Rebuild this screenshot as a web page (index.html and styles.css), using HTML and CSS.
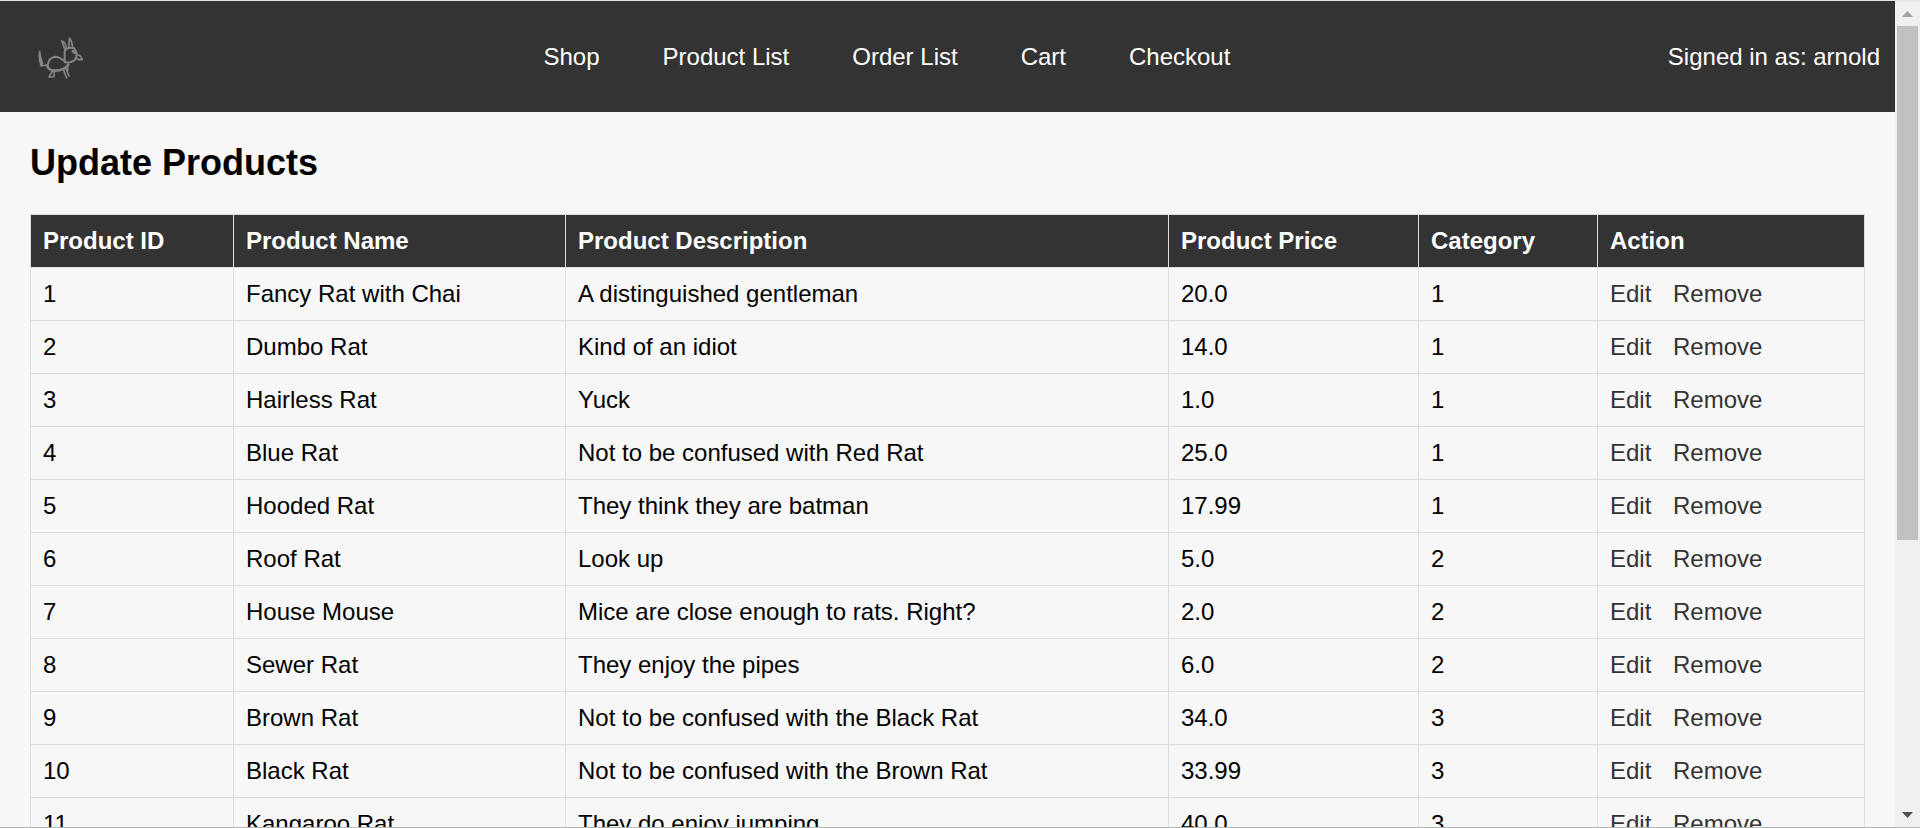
FILE: index.html
```html
<!DOCTYPE html>
<html lang="en">
<head>
<meta charset="utf-8">
<title>Update Products</title>
<link rel="stylesheet" href="styles.css">
</head>
<body>
<div class="window">
  <div class="page">
    <header class="header">
      <a class="logo" href="#" aria-label="Home">
        <svg viewBox="45 33 273 273" fill="none" stroke="#848484" stroke-width="6" stroke-linejoin="round" stroke-linecap="round">
          <path d="M143 196C146 180 150 173 165 170C178 170 185 176 194 184"/>
          <path d="M142 196C143 206 150 211 164 212C183 212 198 206 205 194" stroke-width="8"/>
          <path d="M194 187L194 154C198 144 210 142 222 144L230 158C231 170 229 176 222 182C216 186 208 189 198 187"/>
          <path d="M196 150C191 142 190 131 185 123C192 124 198 132 199 146" stroke-width="5"/>
          <path d="M207 143C207 132 207 122 209 114C215 121 217 133 218 144" stroke-width="5"/>
          <path d="M229 162L241 168L247 179L237 179L228 174" stroke-width="5"/>
          <path d="M219 154L225 158" stroke-width="9"/>
          <path d="M119 154C115 168 119 184 123 198L141 195M119 154L122 176L128 191" stroke-width="5"/>
          <path d="M121 172L125 194" stroke-width="7"/>
          <path d="M158 213C154 219 150 224 147 231L162 230L163 213" stroke-width="5"/>
          <path d="M190 208L200 234M197 204L207 228M203 198L203 212" stroke-width="5"/>
        </svg>
      </a>
      <nav class="nav" aria-label="Main">
        <a href="#">Shop</a>
        <a href="#">Product List</a>
        <a href="#">Order List</a>
        <a href="#">Cart</a>
        <a href="#">Checkout</a>
      </nav>
      <span class="user">Signed in as: arnold</span>
    </header>
    <main class="content">
      <h1>Update Products</h1>
      <table class="products">
        <colgroup>
          <col class="col-id"><col class="col-name"><col class="col-desc"><col class="col-price"><col class="col-cat"><col>
        </colgroup>
        <thead>
          <tr><th>Product ID</th><th>Product Name</th><th>Product Description</th><th>Product Price</th><th>Category</th><th>Action</th></tr>
        </thead>
        <tbody>
          <tr><td>1</td><td>Fancy Rat with Chai</td><td>A distinguished gentleman</td><td>20.0</td><td>1</td><td><a href="#">Edit</a> <a href="#">Remove</a></td></tr>
          <tr><td>2</td><td>Dumbo Rat</td><td>Kind of an idiot</td><td>14.0</td><td>1</td><td><a href="#">Edit</a> <a href="#">Remove</a></td></tr>
          <tr><td>3</td><td>Hairless Rat</td><td>Yuck</td><td>1.0</td><td>1</td><td><a href="#">Edit</a> <a href="#">Remove</a></td></tr>
          <tr><td>4</td><td>Blue Rat</td><td>Not to be confused with Red Rat</td><td>25.0</td><td>1</td><td><a href="#">Edit</a> <a href="#">Remove</a></td></tr>
          <tr><td>5</td><td>Hooded Rat</td><td>They think they are batman</td><td>17.99</td><td>1</td><td><a href="#">Edit</a> <a href="#">Remove</a></td></tr>
          <tr><td>6</td><td>Roof Rat</td><td>Look up</td><td>5.0</td><td>2</td><td><a href="#">Edit</a> <a href="#">Remove</a></td></tr>
          <tr><td>7</td><td>House Mouse</td><td>Mice are close enough to rats. Right?</td><td>2.0</td><td>2</td><td><a href="#">Edit</a> <a href="#">Remove</a></td></tr>
          <tr><td>8</td><td>Sewer Rat</td><td>They enjoy the pipes</td><td>6.0</td><td>2</td><td><a href="#">Edit</a> <a href="#">Remove</a></td></tr>
          <tr><td>9</td><td>Brown Rat</td><td>Not to be confused with the Black Rat</td><td>34.0</td><td>3</td><td><a href="#">Edit</a> <a href="#">Remove</a></td></tr>
          <tr><td>10</td><td>Black Rat</td><td>Not to be confused with the Brown Rat</td><td>33.99</td><td>3</td><td><a href="#">Edit</a> <a href="#">Remove</a></td></tr>
          <tr><td>11</td><td>Kangaroo Rat</td><td>They do enjoy jumping</td><td>40.0</td><td>3</td><td><a href="#">Edit</a> <a href="#">Remove</a></td></tr>
        </tbody>
      </table>
    </main>
  </div>
  <div class="scrollbar" aria-hidden="true">
    <svg class="arrow" viewBox="0 0 25 25"><path d="M7 16L12.500 10L18 16Z" fill="#a3a3a3"/></svg>
    <div class="track"><div class="thumb"></div></div>
    <svg class="arrow" viewBox="0 0 25 25"><path d="M7 10L12.500 16L18 10Z" fill="#505050"/></svg>
  </div>
</div>
</body>
</html>
```
FILE: styles.css
```css
* { box-sizing: border-box; }

body {
  margin: 0;
  background: #f7f7f7;
  color: #000;
  font-family: Arial, "Liberation Sans", sans-serif;
  font-size: 24px;
  line-height: 28px;
}

a { text-decoration: none; }

.window {
  display: flex;
  height: 100vh;
  border-top: 1px solid #dfe3e1;
  border-bottom: 1px solid #b0b5b0;
}

.page {
  flex: 1;
  min-width: 0;
  overflow: hidden;
}

.header {
  display: flex;
  align-items: center;
  justify-content: space-between;
  padding: 10px 15px;
  background: #333;
  color: #fff;
}

.logo svg {
  display: block;
  width: 91px;
  height: 91px;
}

.nav {
  display: flex;
  gap: 63px;
}

.nav a { color: #fff; }

.content { padding: 30px; }

h1 {
  margin: 0 0 30px;
  font-size: 36px;
  line-height: 42px;
}

.products {
  width: 100%;
  border-collapse: collapse;
  table-layout: fixed;
}

.col-id { width: 11.07%; }
.col-name { width: 18.1%; }
.col-desc { width: 32.88%; }
.col-price { width: 13.63%; }
.col-cat { width: 9.76%; }

.products th,
.products td {
  padding: 12px;
  border: 1px solid #ddd;
  text-align: left;
}

.products th {
  background: #333;
  color: #fff;
}

.products a {
  margin-right: 15px;
  color: #333;
}

.scrollbar {
  display: flex;
  flex-direction: column;
  width: 25px;
  background: #f0f0f0;
}

.arrow {
  display: block;
  height: 25px;
}

.track {
  flex: 1;
  padding: 0 2px;
}

.thumb {
  height: 66.3%;
  background: #c1c1c1;
}
```
